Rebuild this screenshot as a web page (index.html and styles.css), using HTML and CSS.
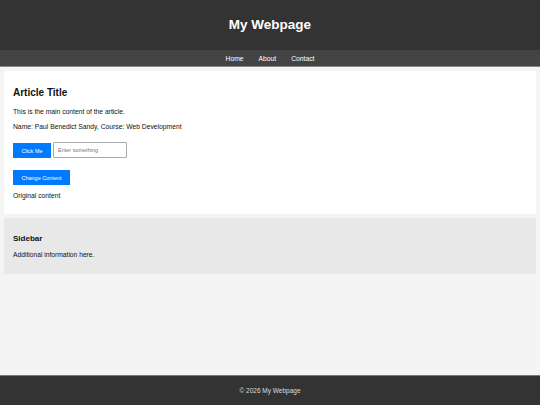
FILE: index.html
```html
<!DOCTYPE html>
<html lang="en">
<head>
<meta charset="utf-8">
<title>My Webpage</title>
<link rel="stylesheet" href="styles.css">
</head>
<body>
<header class="site-header">
  <h1 class="site-title">My Webpage</h1>
</header>
<nav class="site-nav">
  <a href="#" class="nav-link">Home</a>
  <a href="#" class="nav-link">About</a>
  <a href="#" class="nav-link">Contact</a>
</nav>
<main class="content">
  <article class="article">
    <h2 class="article-title">Article Title</h2>
    <p class="text">This is the main content of the article.</p>
    <p class="text">Name: Paul Benedict Sandy, Course: Web Development</p>
    <div class="form-row">
      <button class="btn">Click Me</button>
      <input class="field" type="text" placeholder="Enter something">
    </div>
    <div class="form-row second">
      <button class="btn btn-wide">Change Content</button>
    </div>
    <p class="text original">Original content</p>
  </article>
  <aside class="sidebar">
    <h3 class="sidebar-title">Sidebar</h3>
    <p class="sidebar-text">Additional information here.</p>
  </aside>
</main>
<footer class="site-footer">
  <p class="footer-text">© 2026 My Webpage</p>
</footer>
</body>
</html>
```
FILE: styles.css
```css
* { box-sizing: border-box; }
html, body { margin: 0; padding: 0; }
body {
  font-family: "Liberation Sans", Arial, sans-serif;
  background: #f4f4f4;
  color: #111;
  min-height: 405px;
  display: flex;
  flex-direction: column;
}
.site-header {
  background: #333;
  height: 50px;
  display: flex;
  align-items: center;
  justify-content: center;
}
.site-title {
  margin: 0;
  color: #fff;
  font-size: 13.5px;
  line-height: 16px;
  font-weight: bold;
}
.site-nav {
  background: #444;
  height: 17px;
  border-bottom: 1px solid #888;
  display: flex;
  justify-content: center;
  align-items: center;
  gap: 15px;
  padding-top: 1px;
}
.nav-link {
  color: #fff;
  text-decoration: none;
  font-size: 6.75px;
  line-height: 8px;
}
.content {
  padding: 4px;
  display: flex;
  flex-direction: column;
  gap: 4px;
}
.article {
  background: #fff;
  padding: 10px 9px 0;
  height: 143px;
}
.article-title {
  margin: 6px 0 8px;
  font-size: 10px;
  line-height: 12px;
  font-weight: bold;
}
.text {
  margin: 0;
  font-size: 6.75px;
  line-height: 9px;
}
.text + .text { margin-top: 5.5px; }
.form-row {
  display: flex;
  gap: 2px;
  margin-top: 12.5px;
}
.form-row.second { margin-top: 12px; }
.btn {
  background: #007bff;
  color: #fff;
  border: none;
  height: 15px;
  padding: 0;
  width: 38px;
  white-space: nowrap;
  font-family: "Liberation Sans", Arial, sans-serif;
  font-size: 5.5px;
}
.btn-wide { width: 57px; }
.field {
  width: 74px;
  height: 16px;
  margin-top: -1px;
  border: 1px solid #aaa;
  border-radius: 1px;
  padding: 0 4px;
  font-family: "Liberation Sans", Arial, sans-serif;
  font-size: 5.5px;
}
.field::placeholder { color: #777; }
.text.original { margin-top: 5.5px; }
.sidebar {
  background: #e8e8e8;
  height: 56px;
  padding: 10px 9px;
}
.sidebar-title {
  margin: 6px 0 7px;
  font-size: 8px;
  line-height: 10px;
  font-weight: bold;
}
.sidebar-text {
  margin: 0;
  font-size: 6.7px;
  line-height: 8px;
}
.site-footer {
  margin-top: auto;
  background: #333;
  border-top: 1px solid #777;
  height: 30px;
  display: flex;
  align-items: center;
  justify-content: center;
}
.footer-text {
  margin: 0;
  color: #ddd;
  font-size: 6.5px;
  line-height: 8px;
}
```
